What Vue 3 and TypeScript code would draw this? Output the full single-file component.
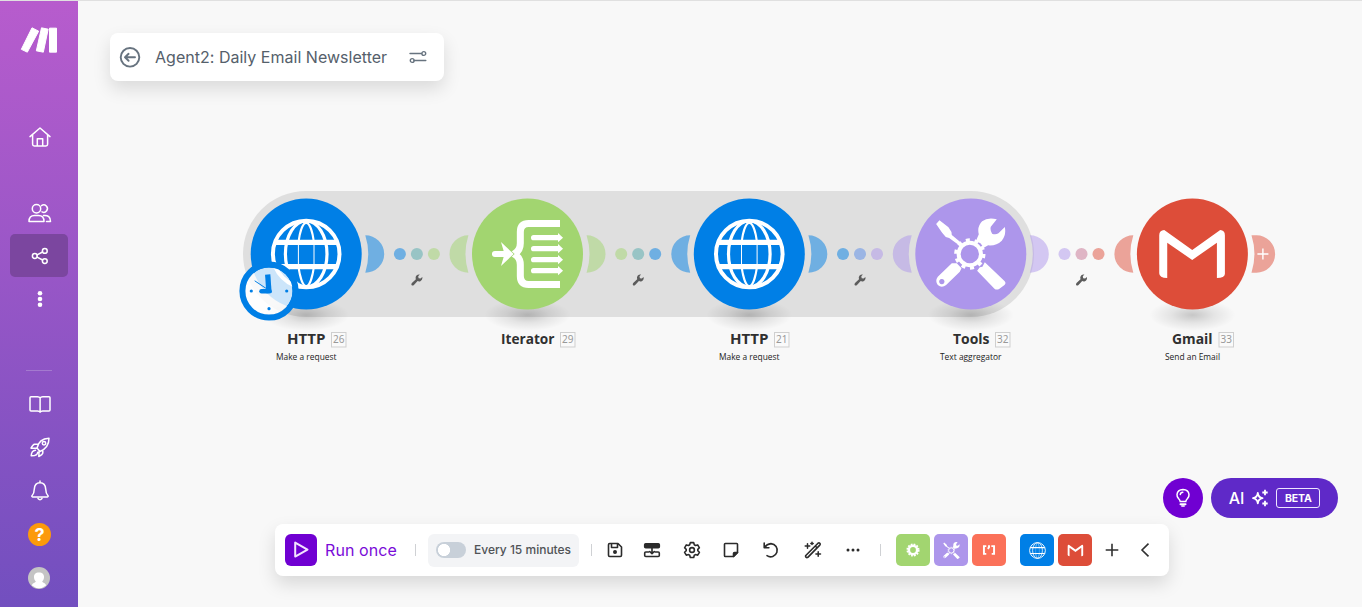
<script setup lang="ts">
interface FlowNode {
  id: number
  title: string
  subtitle: string
  icon: string
  color: string
  cx: number
  titleX: number
  titleW: number
  badgeX: number
  subX: number
  subW: number
}

const nodes: FlowNode[] = [
  { id: 26, title: 'HTTP', subtitle: 'Make a request', icon: 'globe', color: '#007fe6', cx: 306.2, titleX: 287, titleW: 38.5, badgeX: 331.5, subX: 276, subW: 60.5 },
  { id: 29, title: 'Iterator', subtitle: '', icon: 'iterator', color: '#a2d570', cx: 527.5, titleX: 501, titleW: 53.5, badgeX: 560.5, subX: 0, subW: 0 },
  { id: 21, title: 'HTTP', subtitle: 'Make a request', icon: 'globe', color: '#007fe6', cx: 749.3, titleX: 730, titleW: 38.5, badgeX: 774.5, subX: 719, subW: 60.5 },
  { id: 32, title: 'Tools', subtitle: 'Text aggregator', icon: 'tools', color: '#ad96eb', cx: 970.8, titleX: 953, titleW: 36.5, badgeX: 995.5, subX: 940, subW: 61.5 },
  { id: 33, title: 'Gmail', subtitle: 'Send an Email', icon: 'gmail', color: '#dd4d39', cx: 1192.4, titleX: 1172, titleW: 40.5, badgeX: 1219, subX: 1165, subW: 55 },
]

const cy = 254

const mix = (a: string, b: string): string => {
  const part = (s: string, i: number) => parseInt(s.slice(i, i + 2), 16)
  return `rgb(${[1, 3, 5].map((i) => Math.round((part(a, i) + part(b, i)) / 2)).join(',')})`
}

const links = nodes.slice(0, -1).map((n, i) => ({
  x: n.cx + 110.7,
  colors: [n.color, mix(n.color, nodes[i + 1].color), nodes[i + 1].color],
}))

const tiles = [
  { icon: 'gear', color: '#a2d570', size: 16 },
  { icon: 'tools', color: '#ad96eb', size: 17 },
  { icon: 'parser', color: '#fb7159', size: 14 },
  { icon: 'globe', color: '#007fe6', size: 17 },
  { icon: 'gmail', color: '#dd4d39', size: 17 },
]
</script>

<template>
  <div class="app">
    <nav class="sidebar">
      <svg class="logo" viewBox="60 78 114 84" width="38" height="28" fill="#fff" stroke="#fff" stroke-width="3" stroke-linejoin="round">
        <path d="M96 83.500 116 93.500 82 156.500 64 148Z" />
        <path d="M124.500 83.500 144.500 87.500 130 156.500 109 152.500Z" />
        <path d="M148.500 84.500h21v72h-21z" />
      </svg>
      <a class="item home">
        <svg width="24" height="24" viewBox="0 0 24 24"><path d="M2 11.600 12 3l10 8.600M4.600 10v9.300q0 1.700 1.700 1.700h11.600q1.700 0 1.700-1.700V10M9.300 20.800v-7h5.400v7" /></svg>
      </a>
      <a class="item">
        <svg width="24" height="24" viewBox="0 0 24 24"><circle cx="8.500" cy="7.800" r="4.200" /><path d="M1 20.500q0-6 5.500-6h4q5.500 0 5.500 6zM13.500 4.600a3.700 3.700 0 1 1 .5 6.300M15.500 14.600q7-.8 7 5.900H18.500" /></svg>
      </a>
      <a class="item active">
        <svg width="24" height="24" viewBox="0 0 24 24"><circle cx="6.800" cy="12" r="2.400" /><circle cx="16.800" cy="6.900" r="2.400" /><circle cx="16.800" cy="17.100" r="2.400" /><path d="m9.100 10.900 5.500-2.900M9.100 13.100l5.500 2.900" /></svg>
      </a>
      <a class="item">
        <svg width="24" height="24" viewBox="0 0 24 24"><g fill="#fff" stroke="none"><circle cx="12" cy="6.200" r="2.300" /><circle cx="12" cy="12" r="2.300" /><circle cx="12" cy="17.700" r="2.300" /></g></svg>
      </a>
      <div class="rule"></div>
      <a class="item low">
        <svg width="24" height="24" viewBox="0 0 24 24"><path d="M12.100 6Q11.500 4.700 9.500 4.700H3Q2 4.700 2 5.700V18q0 1 1 1h6.500q2 0 2.600 1.200Q12.700 19 14.700 19H21q1 0 1-1V5.700q0-1-1-1h-6.300q-2 0-2.600 1.300zV20" /></svg>
      </a>
      <a class="item low">
        <svg width="24" height="24" viewBox="0 0 24 24"><path d="M9 13Q11 3.500 21 3.200 21 12.500 12 16.500M9 13l3 3.500M9.800 9.300H6.500Q5 9.500 3 13.200l6-.2M14.800 15v3.200q-.3 1.500-4 3.300l.3-5M7.500 15.200q-4 .3-4.300 5.600 6.300.2 6.500-3.500" /><circle cx="16" cy="8.200" r="1.700" /></svg>
      </a>
      <a class="item low">
        <svg width="24" height="24" viewBox="0 0 24 24"><path d="M12 2v1.800M12 3.800q-5.400 0-5.700 6.300-.1 4.500-2.300 6.600-.6 1 .6 1.200h14.800q1.200-.2.600-1.200-2.200-2.100-2.300-6.600-.3-6.300-5.700-6.300zM10 19.600q2 2.300 4 0" /></svg>
      </a>
      <a class="item low"><span class="help">?</span></a>
      <a class="item low avatar">
        <svg width="22" height="22" viewBox="0 0 22 22"><g stroke="none"><circle cx="11" cy="11" r="11" fill="#c4c4c4" /><path d="M11 5.500c6 0 6 6 3.200 9 .2 1.200 3.800 1.500 3.800 4q-7 5.500-14 0c0-2.500 3.600-2.800 3.800-4-2.800-3-2.800-9 3.200-9z" fill="#fff" /></g></svg>
      </a>
    </nav>

    <main class="stage">
      <header class="title-card">
        <svg width="22" height="22" viewBox="0 0 22 22" fill="none" stroke="#67737f" stroke-width="1.900" stroke-linecap="round" stroke-linejoin="round"><circle cx="11" cy="11.300" r="9.300" /><path d="M16 11.300H6.200M9.600 7.800 6 11.300l3.600 3.500" /></svg>
        <h1>Agent2: Daily Email Newsletter</h1>
        <svg width="18" height="14" viewBox="0 0 18 14" fill="none" stroke="#67737f" stroke-width="1.400"><path d="M1 3.500h11.500M5 10.500h11.800" stroke-linecap="round" /><circle cx="14.800" cy="3.500" r="1.900" /><circle cx="3.200" cy="10.500" r="1.900" /></svg>
      </header>

      <svg class="canvas" width="1284" height="240" viewBox="78 160 1284 240">
        <defs>
          <radialGradient id="shade"><stop offset="0" stop-color="#000" stop-opacity=".2" /><stop offset=".5" stop-color="#000" stop-opacity=".08" /><stop offset="1" stop-color="#000" stop-opacity="0" /></radialGradient>
          <symbol id="globe" viewBox="-36 -36 72 72">
            <g fill="none" stroke="#fff"><circle r="33.300" stroke-width="4" /><ellipse rx="20.800" ry="33" stroke-width="3.200" /><path d="M-7.800-11C-6.500-22-3.500-31 0-31S6.500-22 7.800-11M-7.800 12C-6.500 22-3.500 32 0 32S6.500 22 7.800 12" stroke-width="2" /><path d="M-7.800-11V12M7.800-11V12" stroke-width="1" /><path d="M-31-11.700h62M-31 12.700h62" stroke-width="5.200" /></g>
          </symbol>
          <symbol id="iterator" viewBox="151 110.500 223 223">
            <path d="M360 130.500H266Q241 130.500 241 156V190Q241 212 222 222 241 232 241 254V288Q241 313.500 266 313.500H360" fill="none" stroke="#fff" stroke-width="21" />
            <path d="m183 186 38 36-38 36 8-27h-26a9 9 0 0 1 0-18h26z" fill="#fff" stroke="#a2d570" stroke-width="4" paint-order="stroke" />
            <g fill="#fff"><path v-for="y in [173, 206, 239, 272]" :key="y" :d="`M281 ${y - 8}H354v-6L369 ${y} 354 ${y + 14}v-6H281a8 8 0 0 1 0-16z`" /></g>
          </symbol>
          <symbol id="tools" viewBox="165 114 216 216">
            <g fill="none" stroke="#fff"><circle cx="270" cy="222" r="33.500" stroke-width="12" /><circle cx="270" cy="222" r="42" stroke-width="10" stroke-dasharray="12 14.390" /></g>
            <g fill="#fff">
              <path d="M169 132 179 121 206 142 215 156 216 165 244 188 237 195 208 174 198 171 187 158Z" />
              <path d="M351 118 333 140Q330 150 337 161 347 165 356 160L375 141Q380 164 366 182 350 198 325 196L312 203 302 190 288 184 297 163Q291 140 307 124 324 111 351 118Z" />
              <path d="M231 250 245 265 240 275 199 315Q186 325 174 315 165 302 174 290L216 250ZM186 297a8 8 0 1 0 .1 0z" fill-rule="evenodd" />
              <path d="M292 272 300 262 308 260 315 247 374 303Q380 309 374 315L358 327Q350 331 344 326Z" />
            </g>
          </symbol>
          <symbol id="gmail" viewBox="169.500 114 216 216">
            <path d="M178 166Q178 151 193 150L277 210 361 150Q375 151 375 166V282Q374 294 351 294V188L277 240 202 188V294Q178 294 178 280Z" fill="#fff" />
          </symbol>
          <symbol id="gear" viewBox="-50 -50 100 100">
            <g fill="none" stroke="#fff"><circle r="26" stroke-width="16" /><circle r="36" stroke-width="10" stroke-dasharray="11 7.850" /></g>
          </symbol>
          <symbol id="parser" viewBox="0 0 36 36">
            <path d="M11 8H5v20h6M24 8h7v20h-6M18 6v5l-3 4" fill="none" stroke="#fff" stroke-width="5" />
          </symbol>
          <symbol id="wrench" viewBox="0 0 12 12">
            <path d="M8.900.5 7.300 2.300 7.700 4.300 9.600 4.500 11.400 3Q12 6 9.500 7.200 8 7.700 6.700 7L3 11Q1.800 12 .8 11.200 0 10.200 1 9L5 5.300Q4.200 3.200 5.600 1.600 7 .1 8.900.5Z" fill="#5c5c5c" />
          </symbol>
        </defs>

        <rect x="243" y="191" width="791" height="126" rx="63" fill="#dfdfdf" />

        <g v-for="(link, i) in links" :key="i">
          <circle v-for="(c, k) in link.colors" :key="k" :cx="link.x + (k - 1) * 17" :cy="cy" r="6" :fill="c" opacity=".5" />
          <use href="#wrench" :x="link.x - 6" y="274" width="12" height="12" />
        </g>

        <g v-for="(n, i) in nodes" :key="n.id">
          <ellipse :cx="n.cx" cy="315" rx="43" ry="16" fill="url(#shade)" />
          <g :transform="`translate(${n.cx} ${cy})`" :fill="n.color">
            <path v-if="i < 4" d="M59.100-18.700A18.900 18.700 0 0 1 59.100 18.700 62 62 0 0 0 59.100-18.700Z" opacity=".5" />
            <path v-else d="M59.100-18.700H64A18.700 18.700 0 0 1 64 18.700H59.100A62 62 0 0 0 59.100-18.700Z" opacity=".5" />
            <path v-if="i > 0" d="M-59.100-18.700A18.900 18.700 0 0 0-59.100 18.700 62 62 0 0 1-59.100-18.700Z" opacity=".5" />
            <path v-if="i === 4" d="M65 0h11M70.500-5.500v11" stroke="#fff" stroke-width="1.400" />
            <circle r="55.500" />
            <use v-if="n.icon === 'iterator'" :href="'#' + n.icon" x="-37.200" y="-37.200" width="74.400" height="74.400" />
            <use v-else :href="'#' + n.icon" x="-36" y="-36" width="72" height="72" />
          </g>
          <text class="name" :x="n.titleX" y="344" :textLength="n.titleW" lengthAdjust="spacingAndGlyphs">{{ n.title }}</text>
          <rect :x="n.badgeX" y="332.500" width="14.500" height="14.500" fill="#fafafa" stroke="#cfcfcf" />
          <text class="num" :x="n.badgeX + 7.300" y="343.300">{{ n.id }}</text>
          <text v-if="n.subtitle" class="sub" :x="n.subX" y="360" :textLength="n.subW" lengthAdjust="spacingAndGlyphs">{{ n.subtitle }}</text>
        </g>

        <g transform="translate(269 291)">
          <circle r="23.500" fill="#fff" fill-opacity=".8" />
          <circle r="26.600" fill="none" stroke="#007fe6" stroke-width="6" />
          <g fill="none" stroke="#007fe6" stroke-linecap="round"><path d="M-1.300-16.500 0 2" stroke-width="5.300" stroke-linecap="butt" /><path d="M-7.500.300H.500" stroke-width="4.500" /><path d="M-14-10-2-2" stroke-width="1" /></g>
          <g fill="#007fe6"><circle cx="-17.700" r="1.600" /><circle cx="17.700" r="1.600" /><circle cy="17.700" r="1.600" /></g>
        </g>
      </svg>

      <div class="assist">
        <button class="bulb">
          <svg width="20" height="22" viewBox="0 0 20 22" fill="none" stroke="#fff" stroke-width="1.500" stroke-linecap="round"><path d="M7.200 14.500Q7 13 5.500 11.500 3.800 9.500 4 7.500 4.500 2.500 10 2.400 15.500 2.500 16 7.500 16.200 9.500 14.500 11.500 13 13 12.800 14.500ZM7.300 7.500Q7.500 5.500 9.800 5.300" /><path d="M7.500 17.300h5" stroke-width="2" /><path d="M8.800 19h2.400" stroke-width="1.500" /></svg>
        </button>
        <button class="ai">
          <span class="ai-text">AI</span>
          <svg width="18" height="18" viewBox="0 0 18 18"><path d="M6.800 3.800Q7.200 8.300 11.500 9.200 7.200 10 6.800 14.300 6.400 10 2 9.200 6.400 8.300 6.800 3.800Z" fill="none" stroke="#fff" stroke-width="1.800" stroke-linejoin="round" /><path d="M14 .8v5.400M11.300 3.500h5.400M14 11.800v5.400M11.300 14.500h5.400" stroke="#fff" stroke-width="1.800" /></svg>
          <span class="beta">BETA</span>
        </button>
      </div>

      <footer class="toolbar">
        <button class="play"><svg width="18" height="20" viewBox="0 0 18 20"><path d="M3.200 2.600v14L15.500 9.600Z" fill="none" stroke="#f3e4ff" stroke-width="2" stroke-linejoin="round" /></svg></button>
        <span class="run">Run once</span>
        <i class="sep"></i>
        <div class="schedule"><span class="toggle"></span><span class="every">Every 15 minutes</span></div>
        <i class="sep after"></i>
        <div class="actions">
          <svg viewBox="0 0 18 18"><path d="M2.500 3.700q0-1.200 1.200-1.200H12L15.500 6v8.300q0 1.200-1.200 1.200H3.700q-1.200 0-1.200-1.200ZM5.500 2.500v4h6V3" /><circle cx="9" cy="11" r="1.200" fill="#2b2b2b" /></svg>
          <svg viewBox="0 0 18 18"><rect x="1.700" y="2.700" width="14.600" height="4" rx="1" fill="#2b2b2b" /><path d="M5.700 11H2.800Q1.700 11 1.700 12v2.500q0 1 1.100 1h12.400q1.100 0 1.100-1V12q0-1-1.100-1h-2.900M9 7v5.300M6.700 10.500 9 12.700l2.300-2.200" /></svg>
          <svg viewBox="0 0 18 18"><path d="M7.300 1.600h3.400l.6 2.200 1.200.7 2.200-.6 1.700 2.900-1.600 1.600v1.300l1.600 1.600-1.700 2.900-2.200-.6-1.200.7-.6 2.200H7.300l-.6-2.200-1.200-.7-2.200.6-1.700-2.900 1.600-1.600V8.400L1.600 6.800l1.700-2.900 2.200.6 1.200-.7z" /><circle cx="9" cy="9" r="2.400" /></svg>
          <svg viewBox="0 0 18 18"><path d="M2.500 3.300q0-.8.800-.8h11.400q.8 0 .8.800V11.500l-4 4H3.300q-.8 0-.8-.8Z" /><path d="M15.500 11.500h-3q-1 0-1 1v3z" fill="#2b2b2b" /></svg>
          <svg viewBox="0 0 18 18"><path d="M2.200 2v4.800h4.700M2.600 6.500Q4.800 3 9 2.600A6.600 6.600 0 1 1 5 14.700" /></svg>
          <svg viewBox="0 0 18 18"><path d="M1.800 14.500 14 2.200q1-.8 1.800 0 .8.900 0 1.900L3.800 16.400q-1 .6-1.800-.2-.7-.8-.2-1.700ZM11.300 5l1.700 1.700" /><path d="M3.500 2.700v4.600M1.200 5h4.600M14.200 10.700v4.600M11.900 13h4.600M8 1.200v2.400M6.800 2.400h2.400" stroke-width="1.500" /></svg>
          <svg viewBox="0 0 18 18"><g fill="#2b2b2b" stroke="none"><circle cx="4" cy="9" r="1.500" /><circle cx="9" cy="9" r="1.500" /><circle cx="14" cy="9" r="1.500" /></g></svg>
        </div>
        <i class="sep last"></i>
        <div class="tiles">
          <span v-for="t in tiles" :key="t.icon" class="tile" :class="t.icon" :style="{ background: t.color }">
            <svg :width="t.size" :height="t.size"><use :href="'#' + t.icon" :width="t.size" :height="t.size" /></svg>
          </span>
        </div>
        <svg class="plus" width="14" height="14" viewBox="0 0 14 14"><path d="M7 .7v12.600M.7 7h12.600" /></svg>
        <svg class="chev" width="10" height="14" viewBox="0 0 10 14"><path d="M8.500.6 2 7l6.500 6.400" /></svg>
      </footer>
    </main>
  </div>
</template>

<style>
body { margin: 0; overflow: hidden; }
</style>

<style scoped>
.app { display: flex; width: 1362px; height: 607px; box-sizing: border-box; border-top: 1px solid #e0e0e0; background: #f8f8f8; font-family: Inter, "Liberation Sans", sans-serif; overflow: hidden; }
.sidebar { width: 78px; flex: none; display: flex; flex-direction: column; align-items: center; background: linear-gradient(#b75ccd, #724fbf); }
.logo { margin-top: 25px; flex: none; }
.item { width: 58px; height: 43px; flex: none; display: flex; align-items: center; justify-content: center; border-radius: 5px; }
.item svg { margin-left: 1px; fill: none; stroke: #fff; stroke-width: 1.5; stroke-linejoin: round; stroke-linecap: round; }
.item.avatar svg { margin-left: 0; }
.home { margin: 61px 0 33px; }
.active { background: #7b469f; }
.rule { width: 26px; height: 1px; margin: 50px 0 11px; background: #a47acf; flex: none; }
.low { height: 43.500px; }
.help { width: 23px; height: 23px; margin-left: 1px; border-radius: 50%; background: #fc9a0b; color: #fff; font: 700 18px/23px Inter, sans-serif; text-align: center; }
.stage { position: relative; flex: 1; }
.title-card { width: 334px; height: 48px; margin: 32px 0 0 32px; padding: 0 17px 0 9px; box-sizing: border-box; display: flex; align-items: center; background: #fff; border-radius: 8px; box-shadow: 0 8px 18px rgba(0, 0, 0, .12); }
.title-card h1 { margin: 0 auto 0 14px; font-size: 16px; font-weight: 400; line-height: 20px; letter-spacing: .02px; color: #55606b; white-space: nowrap; }
.canvas { display: block; margin-top: 79px; }
.name { font: 700 15px "Open Sans", "Noto Sans", sans-serif; fill: #303030; }
.num { font: 400 10px "Noto Sans", sans-serif; fill: #999; text-anchor: middle; }
.sub { font: 400 8.800px "Open Sans", "Noto Sans", sans-serif; fill: #222; }
button { border: 0; padding: 0; display: flex; align-items: center; justify-content: center; color: #fff; font-family: inherit; }
.assist { position: absolute; right: 24px; top: 477px; display: flex; gap: 8px; }
.bulb { width: 40px; height: 40px; border-radius: 50%; background: #7000d2; }
.ai { width: 127px; height: 40px; border-radius: 20px; background: #5f29c8; }
.ai-text { font-size: 16px; font-weight: 500; line-height: 20px; }
.ai svg { margin: 0 7px 0 7px; }
.beta { width: 42px; height: 18px; border: 1px solid #eee6ff; border-radius: 3px; font-size: 10.500px; font-weight: 700; line-height: 19px; letter-spacing: -.2px; text-align: center; }
.toolbar { position: absolute; left: 197px; top: 523px; width: 894px; height: 52px; box-sizing: border-box; padding-left: 10px; display: flex; align-items: center; background: #fff; border-radius: 8px; box-shadow: 0 8px 18px rgba(0, 0, 0, .13); }
.play { width: 32px; height: 32px; border-radius: 6px; background: #7000d2; }
.run { width: 90px; margin-left: 8px; font-size: 16px; line-height: 20px; letter-spacing: .1px; color: #7a0bd8; white-space: nowrap; }
.sep { width: 1px; height: 12px; flex: none; background: #cfd1d4; }
.schedule { width: 151px; height: 33px; margin: 1px 12px 0; box-sizing: border-box; padding-left: 8px; display: flex; align-items: center; background: #f3f4f6; border-radius: 6px; }
.toggle { width: 30px; height: 16px; margin: -1px 8px 0 0; border-radius: 8px; background: radial-gradient(circle at 8px 8px, #fff 5.700px, #c8d0d9 6.400px); }
.every { margin-top: -1px; font-size: 12px; font-weight: 500; line-height: 16px; color: #505356; white-space: nowrap; }
.actions { margin-left: 4px; display: grid; grid-template-columns: 38px 36px 44px 34px 46px 38px 42px; justify-items: center; }
.actions svg { width: 18px; height: 18px; fill: none; stroke: #2b2b2b; stroke-width: 1.600; stroke-linejoin: round; stroke-linecap: round; }
.last { margin-left: 6px; }
.tiles { margin-left: 15px; display: flex; gap: 4px; }
.tile { width: 34px; height: 32px; border-radius: 5px; display: flex; align-items: center; justify-content: center; }
.tile.globe { margin-left: 10px; }
.plus { margin-left: 13px; }
.chev { margin-left: 21px; }
.plus path, .chev path { fill: none; stroke: #303030; stroke-width: 1.600; }
</style>
